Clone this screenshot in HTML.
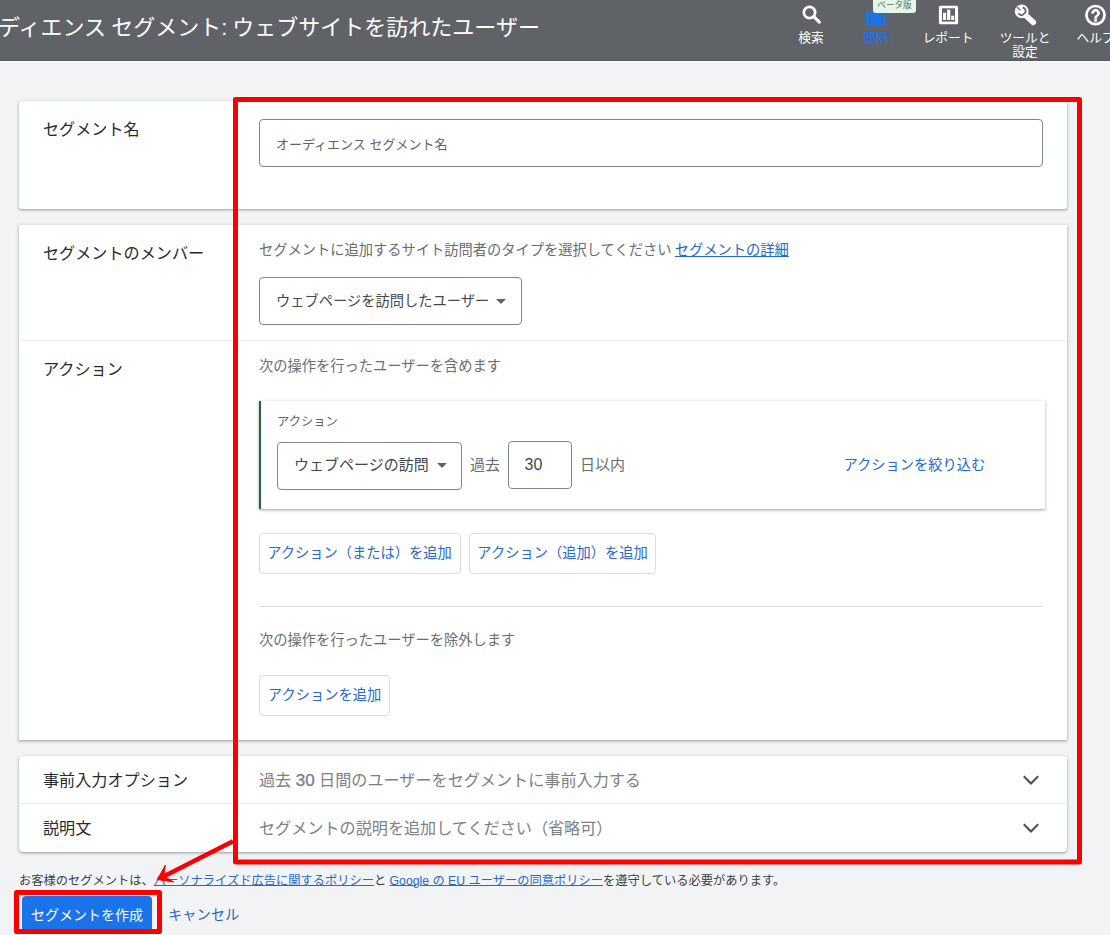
<!DOCTYPE html>
<html lang="ja">
<head>
<meta charset="utf-8">
<title>オーディエンス セグメント</title>
<style>
*{box-sizing:border-box;margin:0;padding:0}
html,body{width:1110px;height:935px;overflow:hidden;background:#f1f3f4}
body{position:relative;font-family:"Liberation Sans","Noto Sans CJK JP",sans-serif;color:#202124}
.abs{position:absolute;white-space:nowrap}
#hdr{left:0;top:0;width:1110px;height:61px;background:#5f6368}
#title{left:-2px;top:12px;word-spacing:-1px;font-size:22px;line-height:32px;color:#fff}
.nav{color:#fff;font-size:12.700px;line-height:13.500px;text-align:center}
.card{background:#fff;border-radius:3px;box-shadow:0 1px 2px rgba(60,64,67,.3),0 1px 3px 1px rgba(60,64,67,.15)}
.lbl{font-size:16.130px;line-height:24px;color:#282b2e}
.desc{font-size:14.250px;line-height:20px;color:#696d72}
.box{border:1px solid #80868b;border-radius:4px;background:#fff}
.dd{font-size:14.250px;line-height:20px;color:#43474b}
.btn{border:1px solid #dadce0;border-radius:4px;background:#fff;color:#2968c8;font-size:14.250px;line-height:20px;text-align:center}
a{color:#2968c8}
.tri{width:0;height:0;border-left:5px solid transparent;border-right:5px solid transparent;border-top:5px solid #5f6368}
</style>
</head>
<body>
<div id="hdr" class="abs"></div>
<div class="abs" style="left:0;top:60px;width:1110px;height:1px;background:#55585d"></div>
<div class="abs" style="left:0;top:61px;width:1110px;height:1px;background:#fbfcfc"></div>
<div id="title" class="abs">ディエンス セグメント: ウェブサイトを訪れたユーザー</div>

<!-- nav icons -->
<svg class="abs" style="left:780px;top:0" width="330" height="32" viewBox="780 0 330 32">
<circle cx="809.500" cy="12.450" r="5.650" fill="none" stroke="#fff" stroke-width="2.700"/>
<line x1="813.800" y1="16.600" x2="819.300" y2="22.100" stroke="#fff" stroke-width="3.200" stroke-linecap="round"/>
<rect x="938.900" y="5.800" width="19.200" height="18.500" rx="1.600" fill="#fff"/><rect x="942" y="8.300" width="13" height="13.300" fill="#5f6368"/>
<rect x="943" y="12.800" width="3.100" height="7.200" fill="#fff"/>
<rect x="947.100" y="9.700" width="3.200" height="10.300" fill="#fff"/>
<rect x="951.200" y="15.700" width="3" height="4.300" fill="#fff"/>
<circle cx="1021.700" cy="11.400" r="6.900" fill="#fff"/>
<line x1="1025" y1="14.700" x2="1033.300" y2="22.400" stroke="#fff" stroke-width="5.600" stroke-linecap="round"/>
<line x1="1016.900" y1="7" x2="1020.600" y2="10.400" stroke="#5f6368" stroke-width="1.200"/>
<path d="M1022.800 7.400 C1025.600 8.600 1026.600 11 1024.800 13 C1023.500 14.600 1021.500 15.600 1020.300 14.900 L1018.300 13.500" fill="none" stroke="#5f6368" stroke-width="1.700" stroke-linejoin="round"/>
<circle cx="1095.500" cy="15.050" r="9.050" fill="none" stroke="#fff" stroke-width="2.700"/>
<g transform="translate(1083.600,3.300)"><path fill="#fff" stroke="#fff" stroke-width=".800" stroke-linejoin="round" d="M11 18h2v-2h-2v2zM12 6c-2.210 0-4 1.790-4 4h2c0-1.100.900-2 2-2s2 .900 2 2c0 2-3 1.750-3 5h2c0-2.250 3-2.500 3-5 0-2.210-1.790-4-4-4z"/></g>
</svg>
<div class="abs nav" style="left:791px;top:32px;width:40px">検索</div>

<div class="abs" style="left:865.5px;top:10.500px;width:20.500px;height:15px;background:#1a73e8;border-radius:1px"></div><div class="abs" style="left:870.500px;top:5px;width:1.500px;height:6px;background:#1a73e8;opacity:.5"></div>
<div class="abs" style="left:868.500px;top:13.500px;width:2.200px;height:8.500px;background:#5f6368;opacity:.7"></div><div class="abs" style="left:880.700px;top:13.500px;width:2.200px;height:8.500px;background:#5f6368;opacity:.7"></div>
<div class="abs nav" style="left:856px;top:32px;width:40px;color:#1a73e8">間隔</div>
<div class="abs" style="left:873px;top:0;width:43px;height:13px;background:#e6f4ea;border-radius:0 0 3px 3px;color:#3f7d54;font-size:8.600px;line-height:10px;text-align:center">ベータ版</div>
<div class="abs nav" style="left:918px;top:32px;width:60px">レポート</div>
<div class="abs nav" style="left:995px;top:32px;width:60px">ツールと<br>設定</div>
<div class="abs nav" style="left:1076.500px;top:32px;width:60px;text-align:left">ヘルプ</div>

<!-- card 1 -->
<div class="abs card" style="left:19px;top:101px;width:1048px;height:108px"></div>
<div class="abs lbl" style="left:43px;top:117px">セグメント名</div>
<div class="abs box" style="left:259px;top:119px;width:784px;height:48px"></div>
<div class="abs" style="left:276px;top:135px;font-size:13px;line-height:20px;color:#5f6368">オーディエンス セグメント名</div>

<!-- card 2 -->
<div class="abs card" style="left:19px;top:225px;width:1048px;height:515px;border-radius:0"></div>
<div class="abs" style="left:19px;top:340px;width:1048px;height:1px;background:#e8eaed"></div>
<div class="abs lbl" style="left:43px;top:241px">セグメントのメンバー</div>
<div class="abs desc" style="left:259px;top:240px">セグメントに追加するサイト訪問者のタイプを選択してください <a href="#" style="margin-left:-0.500px">セグメントの詳細</a></div>
<div class="abs box" style="left:259px;top:277px;width:263px;height:48px"></div>
<div class="abs dd" style="left:276px;top:291px">ウェブページを訪問したユーザー</div>
<div class="abs tri" style="left:496px;top:299px"></div>

<div class="abs lbl" style="left:43px;top:357px">アクション</div>
<div class="abs desc" style="left:259px;top:356px">次の操作を行ったユーザーを含めます</div>

<div class="abs" style="left:259px;top:401px;width:786px;height:108px;background:#fff;border-left:2px solid #28623a;box-shadow:0 1px 2px rgba(60,64,67,.3),0 1px 3px 1px rgba(60,64,67,.15)"></div>
<div class="abs" style="left:277px;top:413px;font-size:12.300px;line-height:18px;color:#5f6368">アクション</div>
<div class="abs box" style="left:277px;top:442px;width:185px;height:48px"></div>
<div class="abs dd" style="left:294px;top:455px;font-size:15px">ウェブページの訪問</div>
<div class="abs tri" style="left:437px;top:463px"></div>
<div class="abs desc" style="left:470px;top:455px;font-size:15px">過去</div>
<div class="abs box" style="left:508px;top:441px;width:64px;height:48px"></div>
<div class="abs dd" style="left:524.500px;top:455px;font-size:16px">30</div>
<div class="abs desc" style="left:580px;top:455px;font-size:15px">日以内</div>
<div class="abs" style="left:843.500px;top:455px;font-size:14.250px;line-height:20px;color:#2968c8">アクションを絞り込む</div>

<div class="abs btn" style="left:259px;top:533px;width:202px;height:41px;padding-top:9px;text-indent:-1px">アクション（または）を追加</div>
<div class="abs btn" style="left:469px;top:533px;width:187px;height:41px;padding-top:9px">アクション（追加）を追加</div>

<div class="abs" style="left:259px;top:606px;width:784px;height:1px;background:#dadce0"></div>
<div class="abs desc" style="left:259px;top:630px">次の操作を行ったユーザーを除外します</div>
<div class="abs btn" style="left:259px;top:675px;width:131px;height:41px;padding-top:9px">アクションを追加</div>

<!-- card 3,4 -->
<div class="abs card" style="left:19px;top:756px;width:1048px;height:96px;border-radius:4px"></div>
<div class="abs" style="left:19px;top:803px;width:1048px;height:1px;background:#e6e8ea"></div>
<div class="abs lbl" style="left:43px;top:768px">事前入力オプション</div>
<div class="abs" style="left:259px;top:768px;font-size:16.130px;line-height:24px;color:#7d8085">過去 <span style="font-size:17px;-webkit-text-stroke:0.350px #7d8085">30</span> 日間のユーザーをセグメントに事前入力する</div>
<div class="abs lbl" style="left:43px;top:816px">説明文</div>
<div class="abs" style="left:259px;top:816px;font-size:16.130px;line-height:24px;color:#7d8085">セグメントの説明を追加してください（省略可）</div>
<svg class="abs" style="left:1019px;top:768px" width="24" height="24" viewBox="0 0 24 24"><path fill="none" stroke="#4d5156" stroke-width="2.100" d="M4.800 8.200L12 15.600 19.200 8.200"/></svg>
<svg class="abs" style="left:1019px;top:816px" width="24" height="24" viewBox="0 0 24 24"><path fill="none" stroke="#4d5156" stroke-width="2.100" d="M4.800 8.200L12 15.600 19.200 8.200"/></svg>

<!-- footer -->
<div class="abs" style="left:19px;top:872px;font-size:12.250px;line-height:18px;color:#3c4043">お客様のセグメントは、<a href="#" style="text-underline-offset:-0.200px">パーソナライズド広告に関するポリシー</a>と <a href="#" style="text-underline-offset:-0.200px">Google の EU ユーザーの同意ポリシー</a>を遵守している必要があります。</div>
<div class="abs" style="left:22px;top:896px;width:130px;height:36px;background:#1a73e8;border-radius:4px;color:#fff;font-size:14px;line-height:20px;text-align:center;padding-top:9px">セグメントを作成</div>
<div class="abs" style="left:168px;top:905px;font-size:14.250px;line-height:20px;color:#2968c8">キャンセル</div>

<!-- annotations -->
<svg class="abs" style="left:0;top:0" width="1110" height="935" viewBox="0 0 1110 935">
<rect x="235.500" y="99.500" width="844" height="762.500" fill="none" stroke="#fa0000" stroke-width="5" stroke-linejoin="round"/>
<rect x="16.500" y="892.500" width="143" height="39" fill="none" stroke="#fa0000" stroke-width="5" stroke-linejoin="round"/>
<line x1="233" y1="841.300" x2="163.500" y2="876.460" stroke="#fa0000" stroke-width="4.600"/>
<path d="M157.300 879.600 L165.300 865.200 L164.300 873.500 L166.400 877.600 L173.700 882 Z" fill="#fa0000" stroke="#fa0000" stroke-width="1" stroke-linejoin="round"/>
</svg>
</body>
</html>
